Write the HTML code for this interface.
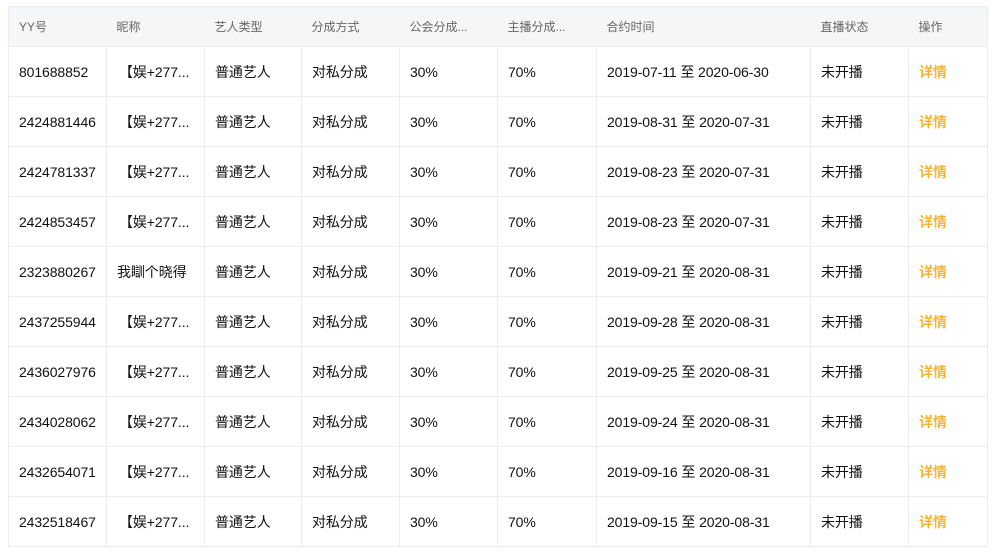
<!DOCTYPE html>
<html><head><meta charset="utf-8"><style>
body{margin:0;background:#fff;font-family:"Liberation Sans","Noto Sans CJK SC",sans-serif;}
table{position:absolute;left:8px;top:6px;border-collapse:collapse;table-layout:fixed;width:979px;border:1px solid #ebedf0;}
th,td{border:1px solid #ebedf0;text-align:left;padding:0 0 0 10px;white-space:nowrap;overflow:hidden;}
th{height:39px;background:#f5f6f8;color:#666;font-weight:normal;font-size:12px;border-left:none;border-right:none;}
td{height:49px;font-size:14px;color:#111;letter-spacing:-0.1px;}
td.n{padding-left:12px;}
td.a{color:#f5b532;font-weight:bold;}
</style></head><body>
<table>
<colgroup><col style="width:98px"><col style="width:98px"><col style="width:97px"><col style="width:98px"><col style="width:98px"><col style="width:99px"><col style="width:214px"><col style="width:98px"><col style="width:79px"></colgroup>
<tr><th>YY号</th><th>昵称</th><th>艺人类型</th><th>分成方式</th><th>公会分成...</th><th>主播分成...</th><th>合约时间</th><th>直播状态</th><th>操作</th></tr>
<tr><td>801688852</td><td class="n">【娱+277...</td><td>普通艺人</td><td>对私分成</td><td>30%</td><td>70%</td><td>2019-07-11 至 2020-06-30</td><td>未开播</td><td class="a">详情</td></tr>
<tr><td>2424881446</td><td class="n">【娱+277...</td><td>普通艺人</td><td>对私分成</td><td>30%</td><td>70%</td><td>2019-08-31 至 2020-07-31</td><td>未开播</td><td class="a">详情</td></tr>
<tr><td>2424781337</td><td class="n">【娱+277...</td><td>普通艺人</td><td>对私分成</td><td>30%</td><td>70%</td><td>2019-08-23 至 2020-07-31</td><td>未开播</td><td class="a">详情</td></tr>
<tr><td>2424853457</td><td class="n">【娱+277...</td><td>普通艺人</td><td>对私分成</td><td>30%</td><td>70%</td><td>2019-08-23 至 2020-07-31</td><td>未开播</td><td class="a">详情</td></tr>
<tr><td>2323880267</td><td>我瞓个晓得</td><td>普通艺人</td><td>对私分成</td><td>30%</td><td>70%</td><td>2019-09-21 至 2020-08-31</td><td>未开播</td><td class="a">详情</td></tr>
<tr><td>2437255944</td><td class="n">【娱+277...</td><td>普通艺人</td><td>对私分成</td><td>30%</td><td>70%</td><td>2019-09-28 至 2020-08-31</td><td>未开播</td><td class="a">详情</td></tr>
<tr><td>2436027976</td><td class="n">【娱+277...</td><td>普通艺人</td><td>对私分成</td><td>30%</td><td>70%</td><td>2019-09-25 至 2020-08-31</td><td>未开播</td><td class="a">详情</td></tr>
<tr><td>2434028062</td><td class="n">【娱+277...</td><td>普通艺人</td><td>对私分成</td><td>30%</td><td>70%</td><td>2019-09-24 至 2020-08-31</td><td>未开播</td><td class="a">详情</td></tr>
<tr><td>2432654071</td><td class="n">【娱+277...</td><td>普通艺人</td><td>对私分成</td><td>30%</td><td>70%</td><td>2019-09-16 至 2020-08-31</td><td>未开播</td><td class="a">详情</td></tr>
<tr><td>2432518467</td><td class="n">【娱+277...</td><td>普通艺人</td><td>对私分成</td><td>30%</td><td>70%</td><td>2019-09-15 至 2020-08-31</td><td>未开播</td><td class="a">详情</td></tr>
</table>
</body></html>
